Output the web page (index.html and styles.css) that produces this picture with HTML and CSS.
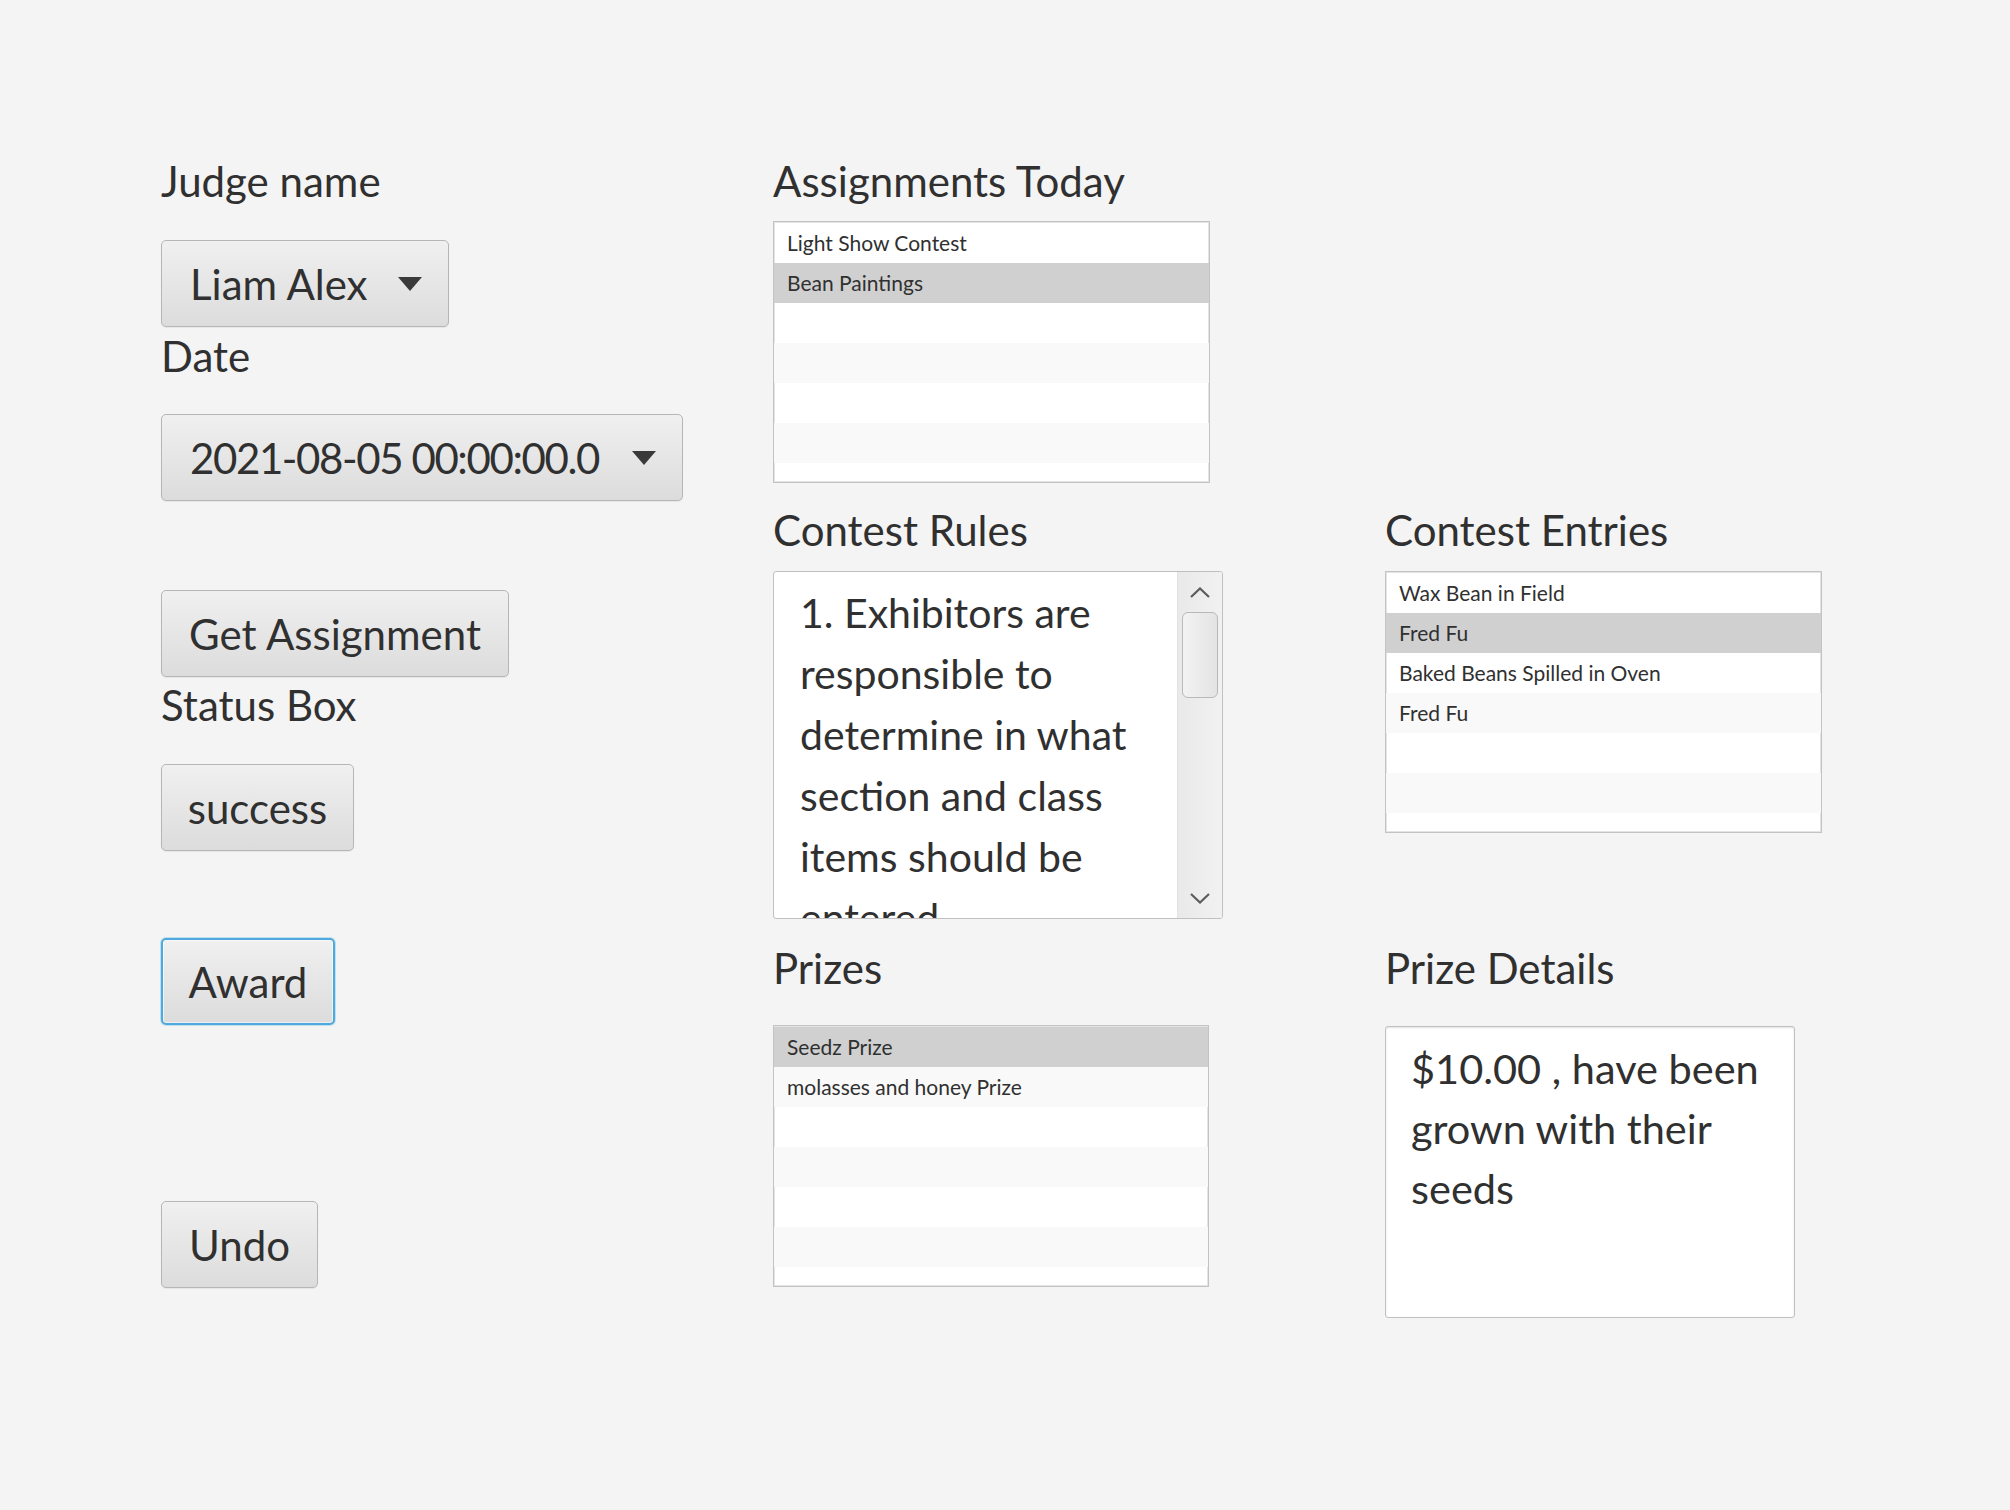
FILE: index.html
```html
<!DOCTYPE html>
<html lang="en">
<head>
<meta charset="utf-8">
<title>Judge Assignment</title>
<link rel="stylesheet" href="styles.css">
</head>
<body>
<div class="screen">
  <div class="controls">
    <div class="label">Judge name</div>
    <div class="combo combo-judge"><span class="combo-value">Liam Alex</span><span class="combo-arrow"></span></div>
    <div class="label label-date">Date</div>
    <div class="combo combo-date"><span class="combo-value combo-value-date">2021-08-05 00:00:00.0</span><span class="combo-arrow"></span></div>
    <button class="btn btn-get">Get Assignment</button>
    <div class="label label-status">Status Box</div>
    <button class="btn btn-status">success</button>
    <button class="btn btn-award is-focused">Award</button>
    <button class="btn btn-undo">Undo</button>
  </div>

  <div class="boards">
    <section class="field field-assign">
      <h2 class="label">Assignments Today</h2>
      <ul class="list list-assign">
        <li>Light Show Contest</li>
        <li class="selected">Bean Paintings</li>
        <li></li><li></li><li></li><li></li><li></li>
      </ul>
    </section>

    <section class="field field-rules">
      <h2 class="label">Contest Rules</h2>
      <div class="textarea rules-area">
        <div class="rules-text">1. Exhibitors are responsible to determine in what section and class items should be entered.</div>
        <div class="scrollbar">
          <div class="sb-btn"><svg width="20" height="11" viewBox="0 0 20 11"><polyline points="1,10 10,1.5 19,10" fill="none" stroke="#5c5c5c" stroke-width="2.2"/></svg></div>
          <div class="sb-track"><div class="sb-thumb"></div></div>
          <div class="sb-btn"><svg width="20" height="11" viewBox="0 0 20 11"><polyline points="1,1 10,9.5 19,1" fill="none" stroke="#5c5c5c" stroke-width="2.2"/></svg></div>
        </div>
      </div>
    </section>

    <section class="field field-entries">
      <h2 class="label">Contest Entries</h2>
      <ul class="list list-entries">
        <li>Wax Bean in Field</li>
        <li class="selected">Fred Fu</li>
        <li>Baked Beans Spilled in Oven</li>
        <li>Fred Fu</li>
        <li></li><li></li><li></li>
      </ul>
    </section>

    <section class="field field-prizes">
      <h2 class="label label-low">Prizes</h2>
      <ul class="list list-prizes">
        <li class="selected">Seedz Prize</li>
        <li>molasses and honey Prize</li>
        <li></li><li></li><li></li><li></li><li></li>
      </ul>
    </section>

    <section class="field field-details">
      <h2 class="label label-low">Prize Details</h2>
      <div class="textarea details-area">$10.00 , have been grown with their seeds</div>
    </section>
  </div>
</div>
</body>
</html>
```

FILE: styles.css
```css
html, body {
  margin: 0;
  background: #f4f4f4;
}

body {
  font-family: Lato, "Noto Sans", sans-serif;
  color: #303030;
}

.screen {
  display: flex;
  align-items: flex-start;
  padding: 156px 0 0 161px;
  min-height: 1510px;
  box-sizing: border-box;
}

/* ---------- left column ---------- */
.controls {
  width: 612px;
  flex: none;
  display: flex;
  flex-direction: column;
  align-items: flex-start;
}

.label {
  margin: 0;
  font-size: 42px;
  line-height: 50px;
  font-weight: 400;
  white-space: nowrap;
}

.label-date {
  margin-top: 4px;
}

.label-status {
  margin-top: 3px;
}

.label-low {
  margin-top: 2px;
}

.combo,
.btn {
  height: 87px;
  box-sizing: border-box;
  border: 1px solid #b6b6b6;
  border-radius: 5px;
  background: linear-gradient(#f0f0f0, #dcdcdc);
  box-shadow: 0 1px 1px rgba(0, 0, 0, 0.06);
  font-family: inherit;
  font-size: 42px;
  color: #303030;
}

.combo {
  display: flex;
  align-items: center;
  justify-content: space-between;
  padding: 0 26px 0 28px;
}

.combo-value {
  white-space: nowrap;
}

.combo-value-date {
  letter-spacing: -1.4px;
}

.combo-arrow {
  width: 0;
  height: 0;
  border-left: 12px solid transparent;
  border-right: 12px solid transparent;
  border-top: 14px solid #3a3a3a;
}

.combo-judge {
  width: 288px;
  margin-top: 34px;
}

.combo-date {
  width: 522px;
  margin-top: 33px;
}

.btn {
  display: flex;
  align-items: center;
  justify-content: center;
  padding: 0;
  cursor: pointer;
}

.btn-get {
  width: 348px;
  margin-top: 89px;
}

.btn-status {
  width: 193px;
  margin-top: 34px;
}

.btn-award {
  width: 174px;
  margin-top: 87px;
}

.btn-undo {
  width: 157px;
  margin-top: 176px;
}

.is-focused {
  border: 2px solid #4fa8e0;
  box-shadow: 0 0 0 1px rgba(3, 158, 211, 0.22), inset 0 0 0 1px rgba(255, 255, 255, 0.55);
}

/* ---------- right boards ---------- */
.boards {
  display: grid;
  grid-template-columns: 612px 437px;
  row-gap: 22px;
  align-items: start;
}

.field-assign { grid-row: 1; grid-column: 1; }
.field-rules { grid-row: 2; grid-column: 1; }
.field-entries { grid-row: 2; grid-column: 2; }
.field-prizes { grid-row: 3; grid-column: 1; }
.field-details { grid-row: 3; grid-column: 2; }

.list {
  list-style: none;
  margin: 16px 0 0;
  padding: 1px 0 0;
  width: 437px;
  height: 262px;
  box-sizing: border-box;
  border: 1px solid #c3c3c3;
  box-shadow: inset 0 0 0 1px #e4e4e4;
  background: #ffffff;
  overflow: hidden;
  font-size: 21px;
}

.list li {
  height: 40px;
  line-height: 40px;
  padding-left: 13px;
  white-space: nowrap;
}

.list li:nth-child(even) {
  background: #f9f9f9;
}

.list li.selected {
  background: #d0d0d0;
}

.list-assign {
  margin-top: 15px;
}

.list-prizes {
  width: 436px;
  margin-top: 32px;
}

.textarea {
  box-sizing: border-box;
  border: 1px solid #c0c0c0;
  border-radius: 3px;
  background: #ffffff;
  color: #303030;
}

.rules-area {
  width: 450px;
  height: 348px;
  margin-top: 16px;
  display: flex;
  overflow: hidden;
  font-size: 41px;
  line-height: 61px;
}

.rules-text {
  flex: 1;
  padding: 10px 0 0 26px;
  overflow: hidden;
}

.scrollbar {
  width: 45px;
  flex: none;
  display: flex;
  flex-direction: column;
  box-sizing: border-box;
  border-left: 1px solid #e2e2e2;
  background: linear-gradient(to right, #e9e9e9, #f1f1f1);
}

.sb-btn {
  height: 40px;
  display: flex;
  align-items: center;
  justify-content: center;
  flex: none;
}

.sb-btn svg {
  display: block;
}

.sb-track {
  flex: 1;
  padding: 0 4px 0 4px;
}

.sb-thumb {
  height: 86px;
  box-sizing: border-box;
  border: 1px solid #b9b9b9;
  border-radius: 6px;
  background: linear-gradient(to right, #f3f3f3, #e3e3e3);
}

.details-area {
  width: 410px;
  height: 292px;
  margin-top: 33px;
  padding: 11px 22px 0 25px;
  font-size: 41.5px;
  line-height: 60px;
  box-shadow: inset 0 1px 2px rgba(0, 0, 0, 0.12);
}
```
